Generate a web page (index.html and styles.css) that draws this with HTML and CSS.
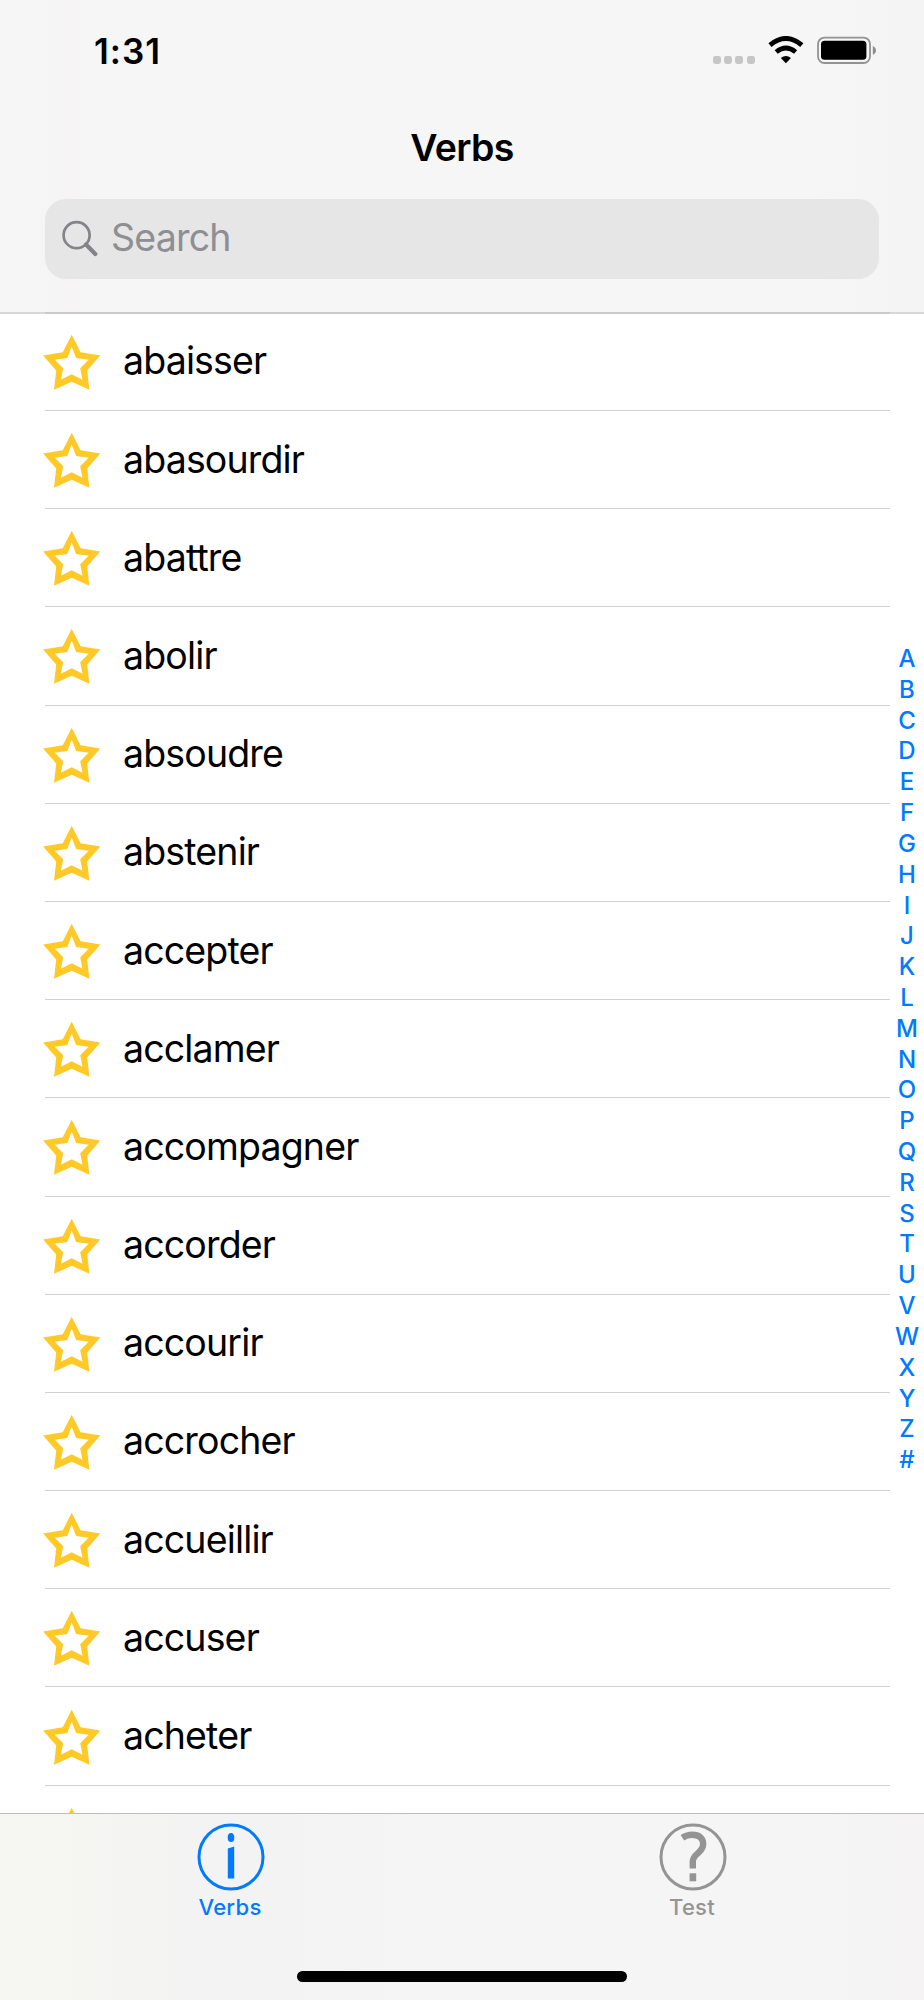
FILE: index.html
```html
<!DOCTYPE html>
<html lang="en">
<head>
<meta charset="utf-8">
<title>Verbs</title>
<link rel="stylesheet" href="styles.css">
</head>
<body>
<svg width="0" height="0" class="defs" aria-hidden="true">
  <symbol id="star" viewBox="0 0 60 58">
    <path fill="#ffca28" fill-rule="evenodd" d="M29.7 .8 38.6 18.2 58.3 21.5 45.2 36.4 47.4 55.8 29.7 47.7 12 55.8 14.2 36.4 1.1 21.5 20.8 18.2ZM29.7 12.4 25.3 24 12.8 25.8 21.2 34.2 18.9 45.8 29.7 40.2 40.5 45.8 38.2 34.2 46.6 25.8 34.1 24Z"/>
  </symbol>
</svg>
<div class="screen">
  <header class="header">
    <div class="status">
      <span class="time">1:31</span>
      <div class="signals">
        <div class="dots"><i></i><i></i><i></i><i></i></div>
        <svg class="wifi" width="36" height="28" viewBox="0 -1 36 28">
          <path d="M2 8.1Q17.9-5.1 33.8 8.1" fill="none" stroke="#000" stroke-width="5"/>
          <path d="M8.2 15Q17.9 7.1 27.6 15" fill="none" stroke="#000" stroke-width="4.8"/>
          <path d="M12.8 21Q17.9 17 23 21L17.9 26.3Z"/>
        </svg>
        <svg class="battery" width="60" height="28" viewBox="0 -0.6 60 28">
          <rect x="1" y="1" width="52" height="25.4" rx="6.5" fill="none" stroke="#929292" stroke-width="1.8"/>
          <rect x="4" y="4.2" width="45.4" height="19" rx="3.5"/>
          <path d="M55.8 9.2Q59 11 59 13.8T55.8 18.2Z" fill="#8e8e8e"/>
        </svg>
      </div>
    </div>
    <h1 class="title">Verbs</h1>
    <div class="search">
      <svg width="38" height="38" viewBox="0 0 38 38">
        <circle cx="15.6" cy="15.2" r="13" fill="none" stroke="#848488" stroke-width="2.7"/>
        <path d="M25 24.6 34.3 34" stroke="#848488" stroke-width="4.2" stroke-linecap="round"/>
      </svg>
      <span>Search</span>
    </div>
  </header>
  <main class="content">
    <ul class="list">
      <li><svg><use href="#star"/></svg><span>abaisser</span></li>
      <li><svg><use href="#star"/></svg><span>abasourdir</span></li>
      <li><svg><use href="#star"/></svg><span>abattre</span></li>
      <li><svg><use href="#star"/></svg><span>abolir</span></li>
      <li><svg><use href="#star"/></svg><span>absoudre</span></li>
      <li><svg><use href="#star"/></svg><span>abstenir</span></li>
      <li><svg><use href="#star"/></svg><span>accepter</span></li>
      <li><svg><use href="#star"/></svg><span>acclamer</span></li>
      <li><svg><use href="#star"/></svg><span>accompagner</span></li>
      <li><svg><use href="#star"/></svg><span>accorder</span></li>
      <li><svg><use href="#star"/></svg><span>accourir</span></li>
      <li><svg><use href="#star"/></svg><span>accrocher</span></li>
      <li><svg><use href="#star"/></svg><span>accueillir</span></li>
      <li><svg><use href="#star"/></svg><span>accuser</span></li>
      <li><svg><use href="#star"/></svg><span>acheter</span></li>
      <li><svg><use href="#star"/></svg></li>
    </ul>
    <nav class="index">
      <b>A</b><b>B</b><b>C</b><b>D</b><b>E</b><b>F</b><b>G</b><b>H</b><b>I</b><b>J</b><b>K</b><b>L</b><b>M</b><b>N</b><b>O</b><b>P</b><b>Q</b><b>R</b><b>S</b><b>T</b><b>U</b><b>V</b><b>W</b><b>X</b><b>Y</b><b>Z</b><b>#</b>
    </nav>
  </main>
  <footer class="footer">
    <div class="tabs">
      <a class="tab active">
        <svg width="68" height="68" viewBox="0 0 68 68">
          <circle cx="34" cy="34" r="32" fill="none" stroke="currentColor" stroke-width="3"/>
          <ellipse cx="34" cy="14.5" rx="3.3" ry="4.6" fill="currentColor"/>
          <path d="M30.8 25.6 37.2 23.4V55.5H30.8Z" fill="currentColor"/>
        </svg>
        <span>Verbs</span>
      </a>
      <a class="tab">
        <svg width="68" height="68" viewBox="0 0 68 68">
          <circle cx="34" cy="34" r="32" fill="none" stroke="currentColor" stroke-width="3"/>
          <path d="M23.4 14.8Q28 11.8 33 11.8C40.6 11.8 44.2 15.5 44.2 21C44.2 30 33.8 30.5 33.8 38.5V45.6" fill="none" stroke="currentColor" stroke-width="6.4"/>
          <path d="M30.6 50.3H37.2V58.3H30.6Z" fill="currentColor"/>
        </svg>
        <span>Test</span>
      </a>
    </div>
    <div class="home"></div>
  </footer>
</div>
</body>
</html>
```
FILE: styles.css
```css
* { box-sizing: border-box; }
body { margin: 0; background: #fff; font-family: Inter, "Liberation Sans", sans-serif; color: #000; }
.defs { display: block; position: absolute; }
.screen { width: 924px; height: 2000px; display: flex; flex-direction: column; overflow: hidden; }

.header {
  height: 314px; flex: none; padding: 0 45px;
  display: flex; flex-direction: column;
  background:
    linear-gradient(#cacaca, #cacaca) 45px 100% / 845px 2px no-repeat,
    linear-gradient(#d8d8d8, #d8d8d8) 0 100% / 100% 2px no-repeat,
    linear-gradient(90deg, #f6f6f6 0, #f5f5f5 6%, #f6f4f5 8%, #f6f6f6 9%, #f6f6f6 88%, #f5f4f4 100%);
}
.status { height: 100px; display: flex; justify-content: space-between; padding: 0 2px 0 49px; }
.time { font-size: 35px; font-weight: 600; line-height: 42px; padding-top: 30px; letter-spacing: 1px; }
.signals { display: flex; padding-top: 36px; }
.dots { display: flex; gap: 3.2px; padding-top: 20px; width: 55px; }
.dots i { width: 8px; height: 8px; border-radius: 2.4px; background: #c6c6c6; }
.wifi { margin-right: 13px; }
.title { margin: 0; height: 99px; padding-top: 25px; text-align: center; font-size: 37.5px; line-height: 46px; font-weight: 600; letter-spacing: -0.7px; }
.search {
  height: 80px; border-radius: 21px; background: #e6e6e6; padding-left: 16px;
  display: flex; align-items: center; color: #8e8e93; font-size: 37.5px; letter-spacing: -0.8px;
}
.search span { margin: -4px 0 0 12px; }

.content { flex: 1; min-height: 0; display: flex; padding-left: 42px; overflow: hidden; }
.list { list-style: none; margin: 0; padding: 0; width: 848px; margin-top: -1.2px; }
.list li {
  height: 98.2px; display: flex; align-items: center;
  background: linear-gradient(#d2d2d4, #d2d2d4) 3px 100% / 845px 1px no-repeat;
}
.list svg { width: 60px; height: 58px; flex: none; margin-top: 2px; }
.list span { font-size: 37.5px; line-height: 44px; letter-spacing: -0.85px; margin: -1px 0 0 21px; }
.index { width: 34px; display: flex; flex-direction: column; padding-top: 330px; color: #007aff; text-align: center; }
.index b { height: 30.82px; line-height: 30.82px; font-size: 24px; font-weight: 550; }

.footer {
  height: 187px; flex: none; border-top: 1px solid #bdbdbf;
  display: flex; flex-direction: column; align-items: center;
  background: linear-gradient(90deg, #f6f6f3 0, #f5f5f2 10%, #f3f3f3 20%, #f3f3f3 30%, #f5f5f5 45%, #f5f5f5 90%, #f5f3f4 100%);
}
.tabs { width: 100%; height: 157px; display: flex; }
.tab { flex: 1; display: flex; flex-direction: column; align-items: center; padding-top: 9px; color: #949494; }
.tab svg { margin-right: 1px; }
.active { color: #007aff; }
.tab span { font-size: 22px; line-height: 28px; margin: 2px 2px 0 0; font-weight: 500; letter-spacing: 0.3px; }
.home { width: 330px; height: 11px; border-radius: 6px; background: #000; }
```
